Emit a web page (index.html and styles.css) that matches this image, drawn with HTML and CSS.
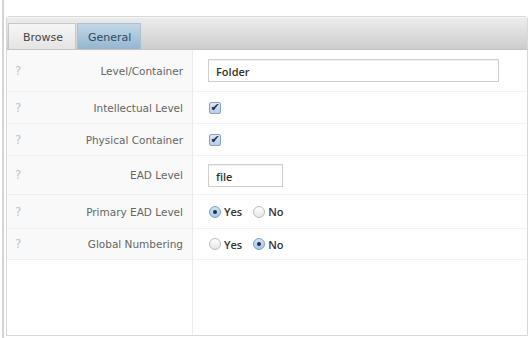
FILE: index.html
```html
<!DOCTYPE html>
<html lang="en">
<head>
    <meta charset="UTF-8">
    <meta name="viewport" content="width=device-width, initial-scale=1.0">
    <title>Edit Item</title>
    <link rel="stylesheet" href="styles.css">
</head>
<body>
    <div class="frame">
        <div class="panel">
            <div class="tab-bar">
                <div class="tab">Browse</div>
                <div class="tab active">General</div>
            </div>
            <div class="form">
                <div class="row first">
                    <div class="label"><span class="help">?</span>Level/Container</div>
                    <div class="value"><div class="text-input wide">Folder</div></div>
                </div>
                <div class="row">
                    <div class="label"><span class="help">?</span>Intellectual Level</div>
                    <div class="value"><span class="check">&#10004;</span></div>
                </div>
                <div class="row">
                    <div class="label"><span class="help">?</span>Physical Container</div>
                    <div class="value"><span class="check">&#10004;</span></div>
                </div>
                <div class="row tall">
                    <div class="label"><span class="help">?</span>EAD Level</div>
                    <div class="value"><div class="text-input short">file</div></div>
                </div>
                <div class="row radios">
                    <div class="label"><span class="help">?</span>Primary EAD Level</div>
                    <div class="value">
                        <span class="radio on"></span><span class="opt">Yes</span>
                        <span class="radio"></span><span class="opt">No</span>
                    </div>
                </div>
                <div class="row last">
                    <div class="label"><span class="help">?</span>Global Numbering</div>
                    <div class="value">
                        <span class="radio"></span><span class="opt">Yes</span>
                        <span class="radio on"></span><span class="opt">No</span>
                    </div>
                </div>
                <div class="row filler">
                    <div class="label"></div>
                    <div class="value"></div>
                </div>
            </div>
        </div>
    </div>
</body>
</html>
```

FILE: styles.css
```css
/* General styles */
body {
    margin: 0;
    background: #fff;
    font-family: "DejaVu Sans", Verdana, sans-serif;
    font-size: 10.5px;
    color: #555;
}
.frame {
    height: 338px;
    margin-left: 2px;
    padding-left: 2px;
    padding-top: 16px;
    border-left: 2px solid #d4d4d4;
    box-sizing: border-box;
}
.panel {
    height: 318px;
    margin-right: 3px;
    border: 1px solid #d8d8d8;
    border-radius: 3px 3px 0 0;
    display: flex;
    flex-direction: column;
}

/* Tabs */
.tab-bar {
    height: 33px;
    background: linear-gradient(#ececec, #cdcdcd);
    border-top: 1px solid #f6f6f6;
    border-bottom: 1px solid #c4c4c4;
    display: flex;
    align-items: flex-end;
    padding-left: 1px;
    gap: 1px;
    box-sizing: border-box;
}
.tab {
    height: 26px;
    padding: 0 12px 0 14px;
    line-height: 27px;
    font-size: 11px;
    color: #444;
    background: linear-gradient(#f6f6f6, #e4e4e4);
    border: 1px solid #c8c8c8;
    border-bottom: none;
    box-sizing: border-box;
}
.tab.active {
    padding: 0 9px 0 10px;
    color: #2c4a66;
    background: linear-gradient(#c3d7e6, #93b6d0);
    border-color: #a9c1d4;
}

/* Form rows */
.form {
    flex: 1;
    display: flex;
    flex-direction: column;
}
.row {
    display: grid;
    grid-template-columns: 186px 1fr;
    height: 32px;
}
.row.first {
    height: 42px;
}
.row.tall {
    height: 39px;
}
.row.radios {
    height: 34px;
}
.row.last {
    height: 31px;
}
.row.filler {
    flex: 1;
}
.label {
    display: flex;
    align-items: center;
    justify-content: space-between;
    padding: 0 9px 0 8px;
    background: #f9f9f9;
    border-right: 1px solid #ececec;
    border-bottom: 1px solid #efefef;
    color: #666;
}
.value {
    display: flex;
    align-items: center;
    padding-left: 15px;
    border-bottom: 1px solid #f2f2f2;
}
.filler .label {
    background: #fff;
    border-bottom: none;
}
.filler .value {
    border-bottom: none;
}
.help {
    font-size: 12px;
    color: #c4c4c4;
}

/* Inputs */
.text-input {
    height: 23px;
    line-height: 23px;
    padding-left: 7px;
    border: 1px solid #cfcfcf;
    box-shadow: inset 0 1px 1px rgba(0, 0, 0, 0.06);
    box-sizing: border-box;
    font-family: "Open Sans", sans-serif;
    font-size: 11px;
    font-weight: 600;
    color: #333;
}
.text-input.wide {
    width: 291px;
}
.text-input.short {
    width: 75px;
}
.check {
    width: 10px;
    height: 10px;
    border: 1px solid #8aa3bd;
    border-radius: 2px;
    background: linear-gradient(#dde9f5, #b7cde4);
    color: #1c2f5a;
    font-size: 11px;
    line-height: 9px;
    text-align: center;
    margin-left: 1px;
}
.radio {
    width: 10px;
    height: 10px;
    border: 1px solid #bbb;
    border-radius: 50%;
    background: linear-gradient(#fff, #e6e6e6);
    position: relative;
    margin-left: 1px;
}
.radio.on {
    border-color: #7d9fc2;
    background: linear-gradient(#d2e3f4, #a9c6e4);
}
.radio.on::after {
    content: "";
    position: absolute;
    left: 3px;
    top: 3px;
    width: 4px;
    height: 4px;
    border-radius: 50%;
    background: #1f2f4a;
}
.opt {
    margin: 0 10px 0 3px;
    font-family: "Open Sans", sans-serif;
    font-size: 11px;
    font-weight: 600;
    color: #333;
}
```
